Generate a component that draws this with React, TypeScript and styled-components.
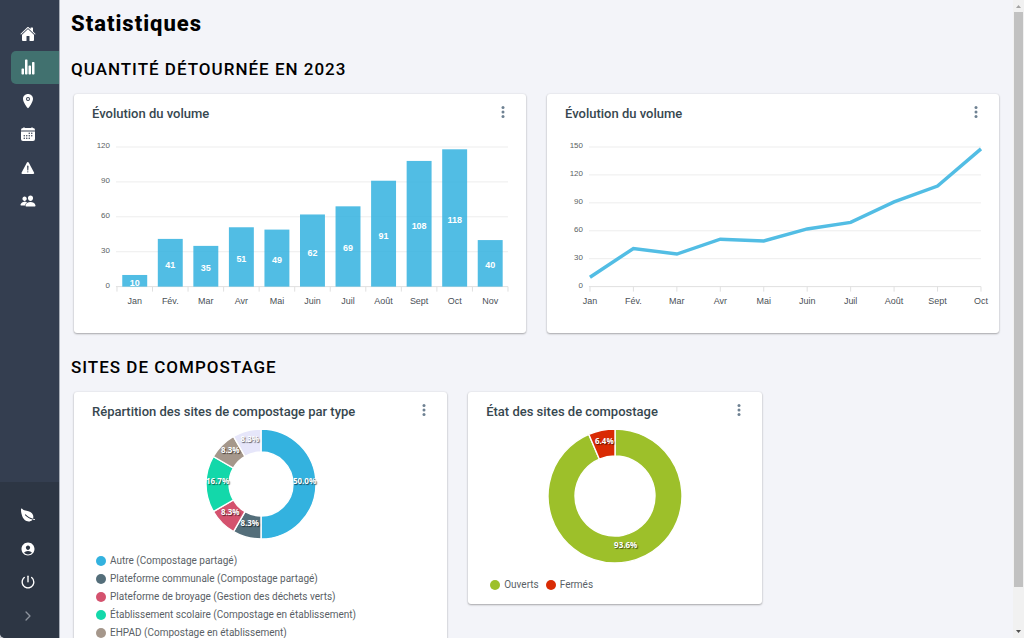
import React from 'react';
import styled, { createGlobalStyle } from 'styled-components';
import {
  IoHome,
  IoStatsChart,
  IoLocation,
  IoCalendar,
  IoWarning,
  IoPeople,
  IoLeaf,
  IoPersonCircle,
  IoPower,
  IoChevronForward,
} from 'react-icons/io5';

const GlobalStyle = createGlobalStyle`
  * { box-sizing: border-box; }
  body {
    margin: 0;
    background: #c9ccd1;
    font-family: Roboto, "Liberation Sans", sans-serif;
    color: #000;
  }
`;

const Shell = styled.div`
  display: flex;
  height: 100vh;
  overflow: hidden;
`;

const Sidebar = styled.aside`
  display: flex;
  flex-direction: column;
  justify-content: space-between;
  flex: 0 0 60px;
  border-right: 1px solid #a9afb9;
  border-bottom-left-radius: 5px;
  background: #343e50;
  overflow: hidden;
`;

const MainNav = styled.nav`
  display: grid;
  grid-auto-rows: 1fr;
  height: 218px;
  padding: 17px 0 0 11px;
`;

const FooterNav = styled.nav`
  display: grid;
  grid-auto-rows: 1fr;
  height: 156px;
  padding: 16px 0 5px 11px;
  background: #2d3644;
`;

const NavLink = styled.a<{ $active?: boolean }>`
  display: flex;
  align-items: center;
  padding-left: 9px;
  border-radius: 5px 0 0 5px;
  color: #fff;
  font-size: 16px;
  background: ${(p) => (p.$active ? '#41716f' : 'transparent')};
`;

const CollapseButton = styled.button`
  display: flex;
  align-items: center;
  padding: 0 0 0 10px;
  border: 0;
  background: none;
  color: #8d949e;
  font-size: 14px;
`;

const Main = styled.main`
  flex: 1;
  min-width: 0;
  padding: 10px 14px 0 11px;
  background: #f3f4f9;
  overflow: hidden;
`;

const PageTitle = styled.h1`
  margin: 0;
  font-size: 22px;
  line-height: 28px;
  font-weight: 800;
  letter-spacing: 1px;
`;

const SectionTitle = styled.h2`
  margin: 0;
  font-size: 17px;
  line-height: 22px;
  font-weight: 500;
  letter-spacing: 1px;
  text-transform: uppercase;
`;

const Section = styled.section`
  padding-top: 20px;
`;

const CardGrid = styled.div`
  display: grid;
  grid-template-columns: repeat(12, minmax(0, 1fr));
  align-items: start;
  gap: 21px;
  margin: 14px 0 3px 3px;
`;

const CardBox = styled.article<{ $span: number; $bottom: number }>`
  grid-column: span ${(p) => p.$span};
  padding: 0 18px ${(p) => p.$bottom}px;
  border-radius: 3px;
  background: #fff;
  box-shadow: 0 1px 2px rgba(0, 0, 0, 0.3), 0 0 2px rgba(0, 0, 0, 0.1);
`;

const CardHeader = styled.header`
  display: flex;
  justify-content: space-between;
  align-items: center;
  height: 36px;
`;

const CardTitle = styled.h3`
  margin: 0;
  padding-top: 4px;
  font-size: 13px;
  line-height: 16px;
  font-weight: 500;
  color: #37474f;
`;

const MenuButton = styled.button`
  display: flex;
  padding: 0;
  border: 0;
  background: none;
`;

const AxisChart = styled.svg`
  display: block;
  width: 100%;
  height: auto;
  margin-top: 5px;
  overflow: visible;
  font-family: "Liberation Sans", Arial, sans-serif;
  font-size: 8px;
`;

const CategoryLabel = styled.text`
  fill: #4b5157;
  font-size: 9px;
  text-anchor: middle;
`;

const BarLabel = styled.text`
  fill: #fff;
  font-size: 9px;
  font-weight: 700;
  text-anchor: middle;
`;

const DonutChart = styled.svg`
  display: block;
  margin: 0 auto;
  overflow: visible;
  font-family: "Open Sans", "Noto Sans", sans-serif;
  font-size: 8px;
  font-weight: 700;
`;

const DonutLabel = styled.text`
  fill: #fff;
  text-anchor: middle;
  text-shadow: 1px 1px 1px rgba(0, 0, 0, 0.6);
`;

const Legend = styled.ul<{ $inline?: boolean }>`
  display: flex;
  flex-direction: ${(p) => (p.$inline ? 'row' : 'column')};
  column-gap: 7px;
  margin: 12px 0 0 4px;
  padding: 0;
  list-style: none;
`;

const LegendItem = styled.li`
  display: flex;
  align-items: center;
  gap: 4px;
  height: 18px;
  font-size: 10px;
  line-height: 18px;
  color: #5a5f66;
  white-space: nowrap;
`;

const Dot = styled.span<{ $color: string }>`
  width: 10px;
  height: 10px;
  border-radius: 50%;
  background: ${(p) => p.$color};
`;

const Scrollbar = styled.div`
  display: flex;
  flex-direction: column;
  align-items: center;
  flex: 0 0 11px;
  background: #f1f1f1;
`;

const ScrollArrow = styled.svg`
  flex: 0 0 12px;
`;

const Thumb = styled.div`
  flex: 575;
  width: 9px;
  background: #c1c1c1;
`;

const TrackRest = styled.div`
  flex: 39;
`;

const MONTHS = ['Jan', 'Fév.', 'Mar', 'Avr', 'Mai', 'Juin', 'Juil', 'Août', 'Sept', 'Oct', 'Nov'];
const BARS = [10, 41, 35, 51, 49, 62, 69, 91, 108, 118, 40];
const LINE = [10, 41, 35, 51, 49, 62, 69, 91, 108, 148];

const LEFT = 25;
const RIGHT = 417;
const TOP = 12;
const BASE = 152;

function Axis({ max, ticks }: { max: number; ticks: number }) {
  const rows = Array.from({ length: max / 30 + 1 }, (_, i) => i * 30);
  return (
    <>
      {rows.map((v) => {
        const y = BASE - (v / max) * (BASE - TOP);
        return (
          <g key={v}>
            <line x1={LEFT - 1} x2={RIGHT} y1={y} y2={y} stroke={v ? '#ededed' : '#e0e0e0'} />
            <text x={LEFT - 7} y={y + 1} textAnchor="end" fill="#5b5f63">{v}</text>
          </g>
        );
      })}
      {Array.from({ length: ticks + 1 }, (_, i) => {
        const x = LEFT + (i * (RIGHT - LEFT)) / ticks;
        return <line key={i} x1={x} x2={x} y1={BASE} y2={BASE + 5} stroke="#e0e0e0" />;
      })}
    </>
  );
}

function BarChart() {
  const step = (RIGHT - LEFT) / BARS.length;
  return (
    <AxisChart viewBox="0 0 417 176" role="img" aria-label="Volume par mois">
      <Axis max={120} ticks={BARS.length} />
      {BARS.map((v, i) => {
        const h = (v / 120) * (BASE - TOP);
        const cx = LEFT + step * (i + 0.5);
        return (
          <g key={i}>
            <rect x={cx - 12.5} y={BASE - h} width={25} height={h} fill="#33b2df" fillOpacity={0.85} />
            <BarLabel x={cx} y={BASE - h / 2 + 5}>{v}</BarLabel>
            <CategoryLabel x={cx} y={169}>{MONTHS[i]}</CategoryLabel>
          </g>
        );
      })}
    </AxisChart>
  );
}

function LineChart() {
  const step = (RIGHT - LEFT) / (LINE.length - 1);
  const points = LINE.map((v, i) => `${LEFT + i * step},${BASE - (v / 150) * (BASE - TOP)}`).join(' ');
  return (
    <AxisChart viewBox="0 0 417 176" role="img" aria-label="Volume par mois">
      <Axis max={150} ticks={LINE.length - 1} />
      <polyline points={points} fill="none" stroke="#52bde4" strokeWidth={3.5} />
      {LINE.map((_, i) => (
        <CategoryLabel key={i} x={LEFT + i * step} y={169}>{MONTHS[i]}</CategoryLabel>
      ))}
    </AxisChart>
  );
}

type Slice = { label: string; value: number; color: string };

function Donut({ slices, outer, inner }: { slices: Slice[]; outer: number; inner: number }) {
  const size = outer * 2 + 2;
  const c = size / 2;
  const at = (pct: number, r: number) => {
    const a = (pct / 100) * Math.PI * 2;
    return [c + r * Math.sin(a), c - r * Math.cos(a)];
  };
  let sum = 0;
  const parts = slices.map((s) => {
    const from = sum;
    sum += s.value;
    return { ...s, from, to: sum };
  });
  return (
    <DonutChart width={size} height={size} viewBox={`0 0 ${size} ${size}`}>
      {parts.map((p) => {
        const big = p.to - p.from > 50 ? 1 : 0;
        return (
          <path
            key={p.label}
            d={`M${at(p.from, outer)}A${outer} ${outer} 0 ${big} 1 ${at(p.to, outer)}L${at(p.to, inner)}A${inner} ${inner} 0 ${big} 0 ${at(p.from, inner)}Z`}
            fill={p.color}
            stroke="#fff"
            strokeWidth={1.4}
          />
        );
      })}
      {parts.map((p) => {
        const [x, y] = at((p.from + p.to) / 2, (outer + inner) / 2);
        return <DonutLabel key={p.label} x={x} y={y}>{p.value.toFixed(1)}%</DonutLabel>;
      })}
    </DonutChart>
  );
}

const TYPES: Slice[] = [
  { label: 'Autre (Compostage partagé)', value: 50, color: '#33b2df' },
  { label: 'Plateforme communale (Compostage partagé)', value: 8.33, color: '#546e7a' },
  { label: 'Plateforme de broyage (Gestion des déchets verts)', value: 8.33, color: '#d4526e' },
  { label: 'Établissement scolaire (Compostage en établissement)', value: 16.67, color: '#13d8aa' },
  { label: 'EHPAD (Compostage en établissement)', value: 8.33, color: '#a5978b' },
  { label: '', value: 8.34, color: '#e6e6fa' },
];

const STATES: Slice[] = [
  { label: 'Ouverts', value: 93.6, color: '#9dc02a' },
  { label: 'Fermés', value: 6.4, color: '#d92b04' },
];

function SliceLegend({ slices, inline }: { slices: Slice[]; inline?: boolean }) {
  return (
    <Legend $inline={inline}>
      {slices.map((s) => (
        <LegendItem key={s.label}>
          <Dot $color={s.color} />
          {s.label}
        </LegendItem>
      ))}
    </Legend>
  );
}

type CardProps = { title: string; span: number; bottom: number; children: React.ReactNode };

function Card({ title, span, bottom, children }: CardProps) {
  return (
    <CardBox $span={span} $bottom={bottom}>
      <CardHeader>
        <CardTitle>{title}</CardTitle>
        <MenuButton aria-label="Options">
          <svg width="10" height="14" viewBox="0 0 10 14" fill="#6e8192">
            <circle cx="5" cy="2.5" r="1.5" />
            <circle cx="5" cy="7" r="1.5" />
            <circle cx="5" cy="11.5" r="1.5" />
          </svg>
        </MenuButton>
      </CardHeader>
      {children}
    </CardBox>
  );
}

export default function App() {
  return (
    <Shell>
      <GlobalStyle />
      <Sidebar>
        <MainNav>
          <NavLink href="#" aria-label="Accueil"><IoHome /></NavLink>
          <NavLink href="#" aria-label="Statistiques" $active><IoStatsChart /></NavLink>
          <NavLink href="#" aria-label="Sites"><IoLocation /></NavLink>
          <NavLink href="#" aria-label="Calendrier"><IoCalendar /></NavLink>
          <NavLink href="#" aria-label="Alertes"><IoWarning /></NavLink>
          <NavLink href="#" aria-label="Utilisateurs"><IoPeople /></NavLink>
        </MainNav>
        <FooterNav>
          <NavLink href="#" aria-label="Compost"><IoLeaf /></NavLink>
          <NavLink href="#" aria-label="Profil"><IoPersonCircle /></NavLink>
          <NavLink href="#" aria-label="Déconnexion"><IoPower /></NavLink>
          <CollapseButton aria-label="Déplier le menu"><IoChevronForward /></CollapseButton>
        </FooterNav>
      </Sidebar>
      <Main>
        <PageTitle>Statistiques</PageTitle>
        <Section>
          <SectionTitle>Quantité détournée en 2023</SectionTitle>
          <CardGrid>
            <Card title="Évolution du volume" span={6} bottom={22}><BarChart /></Card>
            <Card title="Évolution du volume" span={6} bottom={22}><LineChart /></Card>
          </CardGrid>
        </Section>
        <Section>
          <SectionTitle>Sites de compostage</SectionTitle>
          <CardGrid>
            <Card title="Répartition des sites de compostage par type" span={5} bottom={10}>
              <Donut slices={TYPES} outer={55} inner={32} />
              <SliceLegend slices={TYPES} />
            </Card>
            <Card title="État des sites de compostage" span={4} bottom={10}>
              <Donut slices={STATES} outer={67} inner={40} />
              <SliceLegend slices={STATES} inline />
            </Card>
          </CardGrid>
        </Section>
      </Main>
      <Scrollbar aria-hidden="true">
        <ScrollArrow width="11" height="12" viewBox="0 0 11 12"><path d="M3 8L5.5 5L8 8Z" fill="#a3a3a3" /></ScrollArrow>
        <Thumb />
        <TrackRest />
        <ScrollArrow width="11" height="12" viewBox="0 0 11 12"><path d="M3 4L5.5 7L8 4Z" fill="#505050" /></ScrollArrow>
      </Scrollbar>
    </Shell>
  );
}
